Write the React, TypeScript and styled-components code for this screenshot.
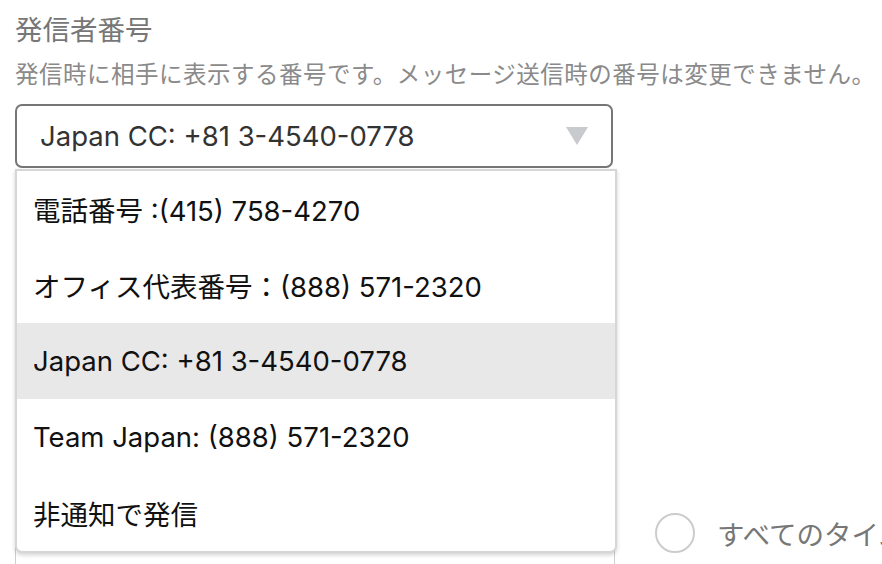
import React from "react";
import styled, { createGlobalStyle } from "styled-components";

const GlobalStyle = createGlobalStyle`
  html, body {
    margin: 0;
    padding: 0;
    background: #ffffff;
    overflow: hidden;
  }
  body {
    font-family: "Inter", "Noto Sans CJK JP", sans-serif;
  }
`;

const Page = styled.div`
  width: 882px;
  height: 564px;
  padding: 16px 0 0 15px;
  box-sizing: border-box;
  overflow: hidden;
`;

const Title = styled.div`
  font-size: 27.5px;
  line-height: 28px;
  color: #777777;
`;

const Hint = styled.div`
  margin-top: 19px;
  font-size: 23.5px;
  letter-spacing: 0.5px;
  line-height: 24px;
  color: #8a8a8a;
  white-space: nowrap;
`;

const Field = styled.div`
  position: relative;
  width: 598px;
  margin-top: 17px;
`;

const SelectBox = styled.div`
  height: 64px;
  box-sizing: border-box;
  border: 2px solid #767676;
  border-radius: 7px;
  display: flex;
  align-items: center;
  justify-content: space-between;
  padding: 0 22px 0 23px;
  font-size: 27.5px;
  color: #333333;
`;

const Arrow = styled.svg`
  width: 24px;
  height: 20px;
  flex: none;
`;

const Menu = styled.ul`
  position: absolute;
  top: 65px;
  left: 0;
  width: 602px;
  margin: 0;
  padding: 0;
  list-style: none;
  box-sizing: border-box;
  background: #ffffff;
  border: 2px solid #d6d6d6;
  border-radius: 0 0 7px 7px;
  box-shadow: 0 2px 4px rgba(0, 0, 0, 0.18);
  z-index: 2;
`;

const Item = styled.li<{ $active?: boolean }>`
  height: 76px;
  display: flex;
  align-items: center;
  padding-left: 16px;
  font-size: 27.5px;
  color: #111111;
  white-space: nowrap;
  background: ${(p) => (p.$active ? "#e8e8e8" : "transparent")};
`;

const Row = styled.div`
  display: flex;
  align-items: flex-start;
  margin-top: 342px;
`;

const UnderBox = styled.div`
  width: 600px;
  height: 100px;
  flex: none;
  box-sizing: border-box;
  border: 1px solid #cfcfcf;
  border-radius: 6px;
`;

const Option = styled.label`
  display: flex;
  align-items: center;
  gap: 22px;
  margin: 3px 0 0 40px;
  font-size: 27.5px;
  color: #777777;
  white-space: nowrap;
`;

const RadioCircle = styled.span`
  width: 40px;
  height: 40px;
  flex: none;
  box-sizing: border-box;
  border: 2px solid #cccccc;
  border-radius: 50%;
`;

const options = [
  "電話番号 :(415) 758-4270",
  "オフィス代表番号：(888) 571-2320",
  "Japan CC: +81 3-4540-0778",
  "Team Japan: (888) 571-2320",
  "非通知で発信",
];

export default function App() {
  const selected = "Japan CC: +81 3-4540-0778";

  return (
    <>
      <GlobalStyle />
      <Page>
        <Title>発信者番号</Title>
        <Hint>
          発信時に相手に表示する番号です。メッセージ送信時の番号は変更できません。
        </Hint>
        <Field>
          <SelectBox>
            <span>{selected}</span>
            <Arrow viewBox="0 0 24 20">
              <path d="M1 1 L23 1 L12 19 Z" fill="#c9cacd" />
            </Arrow>
          </SelectBox>
          <Menu>
            {options.map((o) => (
              <Item key={o} $active={o === selected}>
                {o}
              </Item>
            ))}
          </Menu>
        </Field>
        <Row>
          <UnderBox />
          <Option>
            <RadioCircle />
            すべてのタイムゾーン
          </Option>
        </Row>
      </Page>
    </>
  );
}
